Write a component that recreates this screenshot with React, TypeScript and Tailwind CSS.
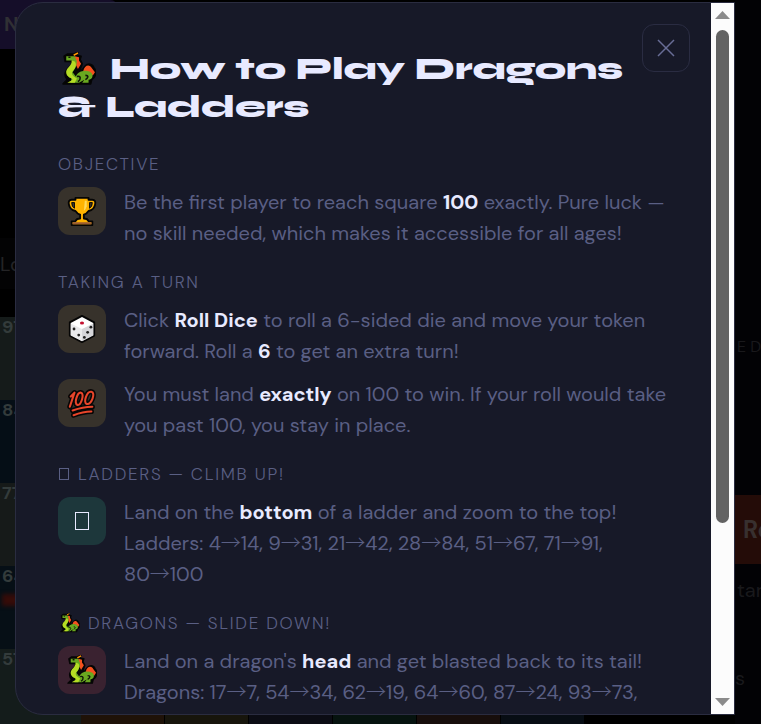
import { Fragment, type ReactNode } from "react";

const boardColumn = [
  { n: 97, color: "bg-[#151b1a]" },
  { n: 84, color: "bg-[#050e16]" },
  { n: 77, color: "bg-[#161a19]" },
  { n: 64, color: "bg-[#060f16]" },
  { n: 57, color: "bg-[#141c1b]" },
];

const bottomTiles = ["bg-[#1f1208]", "bg-[#17150c]", "bg-[#0b0c14]", "bg-[#06130f]", "bg-[#170e0c]", "bg-[#070d14]"];

const ladders = [
  [4, 14],
  [9, 31],
  [21, 42],
  [28, 84],
  [51, 67],
  [71, 91],
  [80, 100],
];

const dragons = [
  [17, 7],
  [54, 34],
  [62, 19],
  [64, 60],
  [87, 24],
  [93, 73],
  [95, 75],
  [98, 79],
];

function DragonIcon({ className }: { className: string }) {
  return (
    <svg viewBox="0 0 32 32" className={className} aria-hidden="true">
      <path
        d="M1 30 L5 26 C1 22 3 17 7 14 C9 12 10 11 9 9 L3 9 L2 4 L5 2 L11 2 L15 0 L14 3 L18 4 L17 7 L19 11 C18 15 16 17 18 18 L21 14 C24 10 29 11 30 15 C33 18 32 24 28 26 L27 30 Z"
        fill="#050505"
        stroke="#050505"
        strokeWidth="1.5"
        strokeLinejoin="round"
      />
      <path d="M12 4 L16 5 L16 8 L18 11 L15 16 L13 12 Z M20 18 C21 12 26 11 28 15 L31 19 L29 22 L25 19 Z" fill="#f4511e" />
      <path
        d="M4 4 H12 L14 9 C14 13 12 16 10 19 L13 23 C15 18 22 16 27 19 C30 21 29 26 25 26 L25 29 H19 L21 26 L16 29 H8 L9 25 C2 22 5 17 9 14 C12 11 11 9 9 8 L4 8 Z"
        fill="#69a820"
      />
      <path d="M9 8 C10 13 3 15 4 20 C5 24 9 24 10 26 L5 29 H12 L14 25 C9 22 8 20 11 17 C13 15 14 11 12 9 Z" fill="#b5dc24" />
      <path d="M6 5 H8 M14 23 C18 22 18 26 15 28 M22 22 C26 22 24 25 22 26" fill="none" stroke="#101408" strokeWidth="1.5" />
      <path d="M11 3 L15 1" stroke="#ff9800" strokeWidth="1.5" />
    </svg>
  );
}

function TrophyIcon() {
  return (
    <svg viewBox="0 0 32 32" className="size-[30px]" aria-hidden="true">
      <path
        d="M9 2 H23 V4 H27 Q31 4 30 9 Q29 15 23 16 Q21 19 18 20 V24 Q22 24 23 27 H27 V31 H5 V27 H9 Q10 24 14 24 V20 Q11 19 9 16 Q3 15 2 9 Q1 4 5 4 H9 Z"
        fill="#ffb300"
        stroke="#050505"
        strokeWidth="2"
        strokeLinejoin="round"
      />
      <path d="M8 7 H5 Q5 12 8 13 Z M24 7 H27 Q27 12 24 13 Z" fill="#37322b" stroke="#050505" strokeWidth="1" />
      <path d="M19 5 H21 V11 Q20 15 18 16 Z" fill="#ffd95a" />
      <path d="M6 28 H26 V30 H6 Z" fill="#9a5b33" />
    </svg>
  );
}

function DieIcon() {
  return (
    <svg viewBox="0 0 32 32" className="size-[30px]" aria-hidden="true">
      <path d="M16 2 L29 9 V23 L16 30 L3 23 V9 Z" fill="#fff" stroke="#050505" strokeWidth="2" strokeLinejoin="round" />
      <path d="M4 10 L16 16 V29 L4 23 Z" fill="#e9e9eb" />
      <path d="M28 10 L16 16 V29 L28 23 Z" fill="#d6d6da" />
      <ellipse cx="16" cy="9.5" rx="2.2" ry="1.6" fill="#c41030" />
      <g fill="#222">
        <circle cx="7.5" cy="16" r="1.5" />
        <circle cx="12.5" cy="22.5" r="1.5" />
        <circle cx="25.5" cy="14" r="1.5" />
        <circle cx="22" cy="19.5" r="1.5" />
        <circle cx="18.5" cy="25" r="1.5" />
      </g>
    </svg>
  );
}

function HundredIcon() {
  const strokes =
    "M4 9 L8 5 L3 20 M15 5 C11 4 7 17 11 18 C15 19 19 6 15 5 Z M26 4 C21 3 17 16 21 17 C26 18 31 5 26 4 Z M6 24 Q17 20 27 20 M7 29 Q17 25 26 25";
  return (
    <svg viewBox="0 0 32 32" className="size-[30px]" fill="none" strokeLinecap="round" strokeLinejoin="round" aria-hidden="true">
      <path d={strokes} stroke="#080606" strokeWidth="5.5" />
      <path d={strokes} stroke="#e8452a" strokeWidth="2.2" />
    </svg>
  );
}

function BoxGlyph({ className }: { className: string }) {
  return <span className={`inline-block border ${className}`} aria-hidden="true" />;
}

function Section({ title, children }: { title: ReactNode; children: ReactNode }) {
  return (
    <section>
      <h3 className="mb-2.5 flex items-center gap-2 text-[17px] leading-[26px] font-light tracking-widest text-[#5a5f84] uppercase">{title}</h3>
      <div className="space-y-3">{children}</div>
    </section>
  );
}

function Rule({ icon, tint, children }: { icon: ReactNode; tint: string; children: ReactNode }) {
  return (
    <div className="flex items-start gap-[18px]">
      <div className={`flex size-12 shrink-0 items-center justify-center rounded-xl ${tint}`}>{icon}</div>
      <p className="min-w-0 flex-1 text-xl leading-[31px] font-normal text-[#5a5f84] [&_strong]:font-bold [&_strong]:text-[#e8eaff]">{children}</p>
    </div>
  );
}

function Moves({ list }: { list: number[][] }) {
  return list.map(([from, to], i) => (
    <Fragment key={from}>
      <span className="whitespace-nowrap">
        {from}
        <span className="font-['Noto_Sans_CJK_JP',sans-serif] leading-none font-light">→</span>
        {to}
        {i < list.length - 1 && ","}
      </span>{" "}
    </Fragment>
  ));
}

function Backdrop() {
  return (
    <div className="flex h-full justify-between" aria-hidden="true">
      <div className="flex flex-1 flex-col">
        <div className="h-[49px] w-[118px] rounded-tr-lg bg-[#150e29] pt-2.5 pl-1 text-xl font-bold text-[#303034]">N</div>
        <div className="mt-[189px] h-[51px] bg-[#030304] pt-3 text-xl leading-7 text-[#242426]">Lo</div>
        <div className="mt-7 flex-1 overflow-hidden">
          {boardColumn.map((tile) => (
            <div key={tile.n} className={`h-[83px] w-[81px] pl-0.5 text-lg leading-5 font-bold text-[#333b3b] ${tile.color}`}>
              {tile.n}
              {tile.n === 64 && <div className="mt-2 h-3 bg-[#360c08] blur-[2px]" />}
            </div>
          ))}
        </div>
      </div>
      <div className="flex w-[26px] flex-col overflow-hidden bg-[#020205] whitespace-nowrap text-[#19191c]">
        <div className="mt-[335px] pl-0.5 text-base leading-6">E D</div>
        <div className="mt-[136px] h-[69px] bg-[#240c08] pl-2 text-2xl leading-[69px] font-bold text-[#38302f]">Roll</div>
        <div className="mt-3 pl-0.5 text-xl">tart</div>
        <div className="mt-[60px] text-xl">s</div>
      </div>
    </div>
  );
}

export default function App() {
  return (
    <div className="relative h-screen overflow-hidden bg-black font-['DM_Sans','Inter',sans-serif]">
      <Backdrop />
      <div className="absolute inset-x-0 bottom-0 flex h-[10px] pl-[81px]" aria-hidden="true">
        {bottomTiles.map((color) => (
          <div key={color} className={`mr-px w-[83px] ${color}`} />
        ))}
      </div>

      <div className="absolute inset-0 flex pt-0.5 pr-[26px] pb-[9px] pl-[15px]">
        <div role="dialog" aria-labelledby="rules-title" className="flex flex-1 overflow-hidden rounded-l-[28px] border border-[#2a2c40] bg-[#171928]">
          <div className="relative flex-1 overflow-hidden pt-[47px] pr-10 pl-[42px]">
            <button
              type="button"
              aria-label="Close"
              className="absolute top-[21px] right-[21px] flex size-12 items-center justify-center rounded-xl border border-[#2a2c42] text-[#686d96]"
            >
              <svg viewBox="0 0 18 18" className="size-[18px]" fill="none" stroke="currentColor" strokeWidth="1.5">
                <path d="M1 1 L17 17 M17 1 L1 17" />
              </svg>
            </button>

            <h2 id="rules-title" className="mb-[25px] pr-8 font-['Syne','DejaVu_Sans',sans-serif] text-[31px] leading-[38px] font-extrabold text-[#e8eaff]">
              <DragonIcon className="mr-3.5 ml-1 inline size-[34px] align-[-7px]" />
              How to Play Dragons &amp; Ladders
            </h2>

            <div className="space-y-5">
              <Section title="Objective">
                <Rule icon={<TrophyIcon />} tint="bg-[#37322b]">
                  Be the first player to reach square <strong>100</strong> exactly. Pure luck — no skill needed, which makes it accessible for all ages!
                </Rule>
              </Section>

              <Section title="Taking a turn">
                <Rule icon={<DieIcon />} tint="bg-[#37322b]">
                  Click <strong>Roll Dice</strong> to roll a 6-sided die and move your token forward. Roll a <strong>6</strong> to get an extra turn!
                </Rule>
                <Rule icon={<HundredIcon />} tint="bg-[#37322b]">
                  You must land <strong>exactly</strong> on 100 to win. If your roll would take you past 100, you stay in place.
                </Rule>
              </Section>

              <Section
                title={
                  <>
                    <BoxGlyph className="mx-px h-3 w-2.5 border-[#5a5f84]" /> Ladders — climb up!
                  </>
                }
              >
                <Rule icon={<BoxGlyph className="h-[18px] w-3.5 border-[#e8eaff]" />} tint="bg-[#1d373b]">
                  Land on the <strong>bottom</strong> of a ladder and zoom to the top! Ladders: <Moves list={ladders} />
                </Rule>
              </Section>

              <Section
                title={
                  <>
                    <DragonIcon className="ml-0.5 size-5" /> Dragons — slide down!
                  </>
                }
              >
                <Rule icon={<DragonIcon className="size-[30px]" />} tint="bg-[#3a2230]">
                  Land on a dragon's <strong>head</strong> and get blasted back to its tail! Dragons: <Moves list={dragons} />
                </Rule>
              </Section>
            </div>
          </div>

          {/* Scrollbar */}
          <div className="flex w-[23px] shrink-0 flex-col items-center justify-between bg-[#fcfcfc] pt-2 pb-2" aria-hidden="true">
            <div className="flex flex-col items-center gap-[11px]">
              <div className="h-2 w-[15px] bg-[#8b8b8b] [clip-path:polygon(50%_0,100%_100%,0_100%)]" />
              <div className="h-[493px] w-[13px] rounded-full bg-[#636363]" />
            </div>
            <div className="h-2 w-[15px] bg-[#8b8b8b] [clip-path:polygon(0_0,100%_0,50%_100%)]" />
          </div>
        </div>
      </div>
    </div>
  );
}
